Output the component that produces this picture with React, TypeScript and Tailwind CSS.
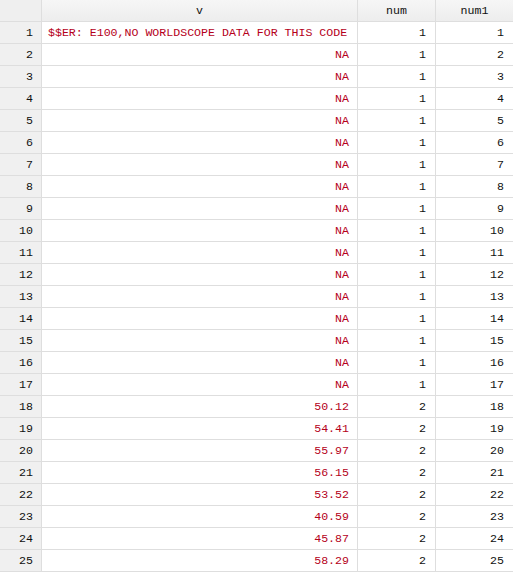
import React from "react";

const vals: string[] = [
  "$$ER: E100,NO WORLDSCOPE DATA FOR THIS CODE",
  ...Array(16).fill("NA"),
  "50.12",
  "54.41",
  "55.97",
  "56.15",
  "53.52",
  "40.59",
  "45.87",
  "58.29",
];

export default function App() {
  return (
    <div className="w-[513px] h-[572px] bg-white overflow-hidden text-[11.6px] leading-none whitespace-nowrap font-['Liberation_Mono','DejaVu_Sans_Mono',monospace]">
      <div className="flex h-[22px] border-b border-[#dedede] bg-gradient-to-b from-[#f6f6f6] to-[#ededed] text-[#111]">
        <div className="w-[42px] shrink-0 border-r border-[#dedede] bg-[#efefef]" />
        <div className="w-[316px] shrink-0 border-r border-[#dedede] flex items-center justify-center">v</div>
        <div className="w-[78px] shrink-0 border-r border-[#dedede] flex items-center justify-center">num</div>
        <div className="w-[77px] shrink-0 flex items-center justify-center">num1</div>
      </div>
      {vals.map((v, i) => (
        <div key={i} className="flex h-[22px] border-b border-[#dedede]">
          <div className="w-[42px] shrink-0 bg-[#f0f0f0] border-r border-[#dedede] flex items-center justify-end pr-[8px] text-[#111]">
            {i + 1}
          </div>
          <div
            className={`w-[316px] shrink-0 border-r border-[#dedede] flex items-center text-[#b5001a] ${
              i === 0 ? "justify-start pl-[6px]" : "justify-end pr-[8px]"
            }`}
          >
            {v}
          </div>
          <div className="w-[78px] shrink-0 border-r border-[#dedede] flex items-center justify-end pr-[9px] text-[#111]">
            {i < 17 ? 1 : 2}
          </div>
          <div className="w-[77px] shrink-0 flex items-center justify-end pr-[9px] text-[#111]">
            {i + 1}
          </div>
        </div>
      ))}
    </div>
  );
}
